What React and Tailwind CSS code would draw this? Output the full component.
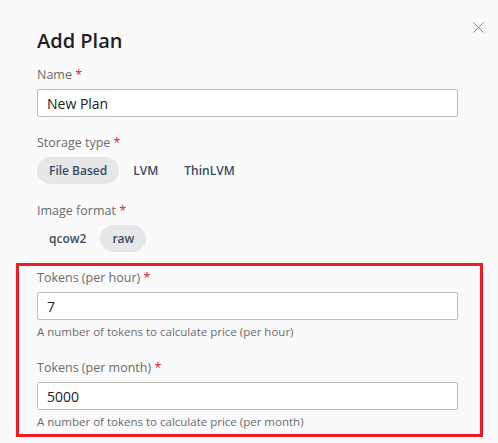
import React, { useState } from "react";

const Label = ({ children }) => (
  <div className="text-[12.5px] leading-[18px] text-[#6b6b6b] pt-[1px]">
    {children} <span className="text-[#d81e3c]">*</span>
  </div>
);

const Pills = ({ options, value, onChange }) => (
  <div className="flex gap-[2px]">
    {options.map((o) => (
      <button
        key={o}
        onClick={() => onChange(o)}
        className={`h-[27px] px-3 rounded-full text-[12px] font-semibold text-[#3a4c63] ${
          value === o ? "bg-[#e6e7e9]" : ""
        }`}
      >
        {o}
      </button>
    ))}
  </div>
);

const Field = ({ label, value, help }) => (
  <div>
    <Label>{label}</Label>
    <input
      defaultValue={value}
      className="mt-[5px] block w-full h-[28px] px-[9px] bg-white border border-[#bcbcbc] rounded-[2px] text-[14px] text-[#222] outline-none"
    />
    {help && (
      <div className="mt-[3px] text-[11.5px] leading-[18px] text-[#6b6b6b]">{help}</div>
    )}
  </div>
);

export default function App() {
  const [storage, setStorage] = useState("File Based");
  const [format, setFormat] = useState("raw");

  return (
    <div
      className="relative w-[498px] h-[443px] bg-[#fafafa] pl-[37px] pr-[40px] pt-[27px] overflow-hidden"
      style={{ fontFamily: '"Open Sans", sans-serif' }}
    >
      <button className="absolute right-[14px] top-[22px] text-[#888]">
        <svg width="11" height="11" viewBox="0 0 11 11" fill="none" stroke="currentColor" strokeWidth="1">
          <path d="M0.5 0.5 L10.5 10.5 M10.5 0.5 L0.5 10.5" />
        </svg>
      </button>

      <h2 className="text-[20px] leading-[27px] font-semibold text-[#1f1f24]">Add Plan</h2>

      <div className="mt-[11px]">
        <Field label="Name" value="New Plan" />
      </div>

      <div className="mt-[16px]">
        <Label>Storage type</Label>
        <div className="mt-[5px]">
          <Pills options={["File Based", "LVM", "ThinLVM"]} value={storage} onChange={setStorage} />
        </div>
      </div>

      <div className="mt-[17px]">
        <Label>Image format</Label>
        <div className="mt-[5px]">
          <Pills options={["qcow2", "raw"]} value={format} onChange={setFormat} />
        </div>
      </div>

      <div className="mt-[11px] -ml-[21px] -mr-[25px] pl-[18px] pr-[22px] pt-[2px] pb-[3px] border-[3px] border-[#ec1c24] flex flex-col gap-[17px]">
        <Field label="Tokens (per hour)" value="7" help="A number of tokens to calculate price (per hour)" />
        <Field label="Tokens (per month)" value="5000" help="A number of tokens to calculate price (per month)" />
      </div>
    </div>
  );
}
